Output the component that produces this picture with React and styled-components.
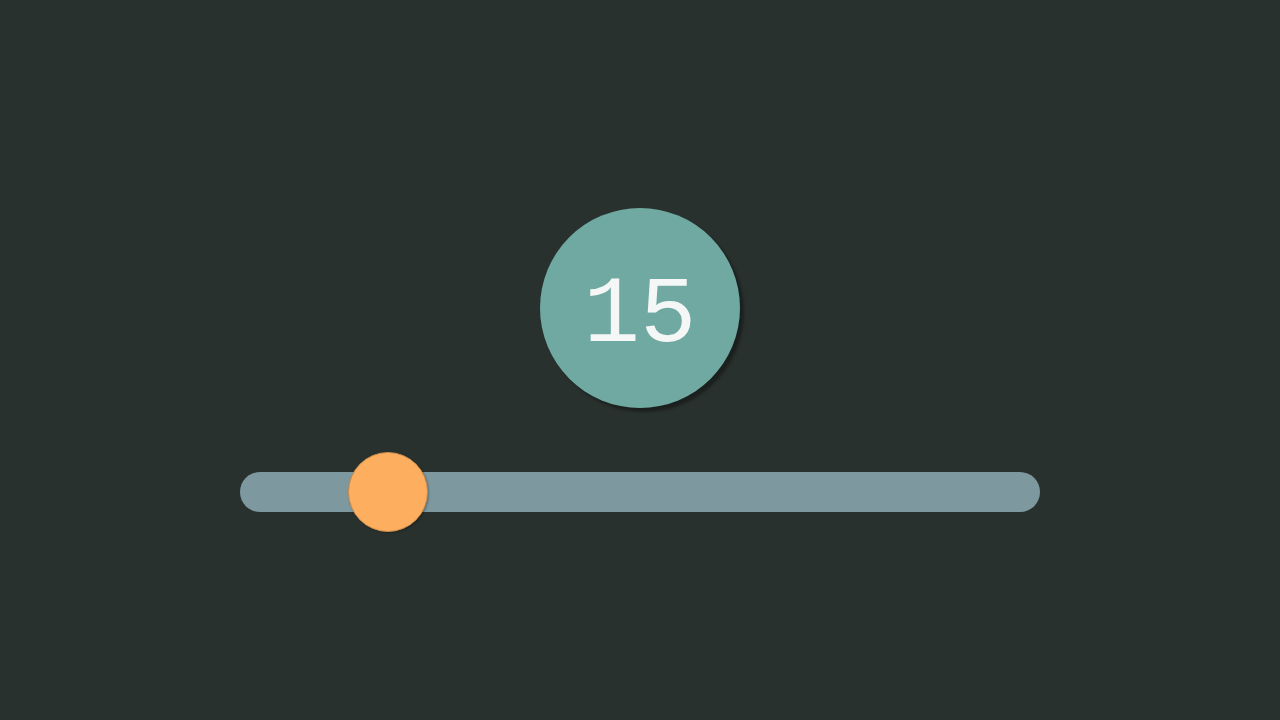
import React, { useState } from "react";
import styled, { createGlobalStyle } from "styled-components";

const Global = createGlobalStyle`
  html, body { margin: 0; padding: 0; background: #29312e; }
  body { font-family: "Liberation Mono", monospace; }
`;

const Page = styled.div`
  width: 1280px;
  height: 720px;
  background: #29312e;
  display: flex;
  flex-direction: column;
  align-items: center;
  padding-top: 208px;
  box-sizing: border-box;
`;

const Bubble = styled.div`
  width: 200px;
  height: 200px;
  border-radius: 50%;
  background: #6fa9a1;
  box-shadow: 4px 4px 3px rgba(0, 0, 0, 0.35);
  display: flex;
  align-items: center;
  justify-content: center;
  color: #f4f7f6;
  font-family: "Liberation Mono", monospace;
  font-size: 94px;
  line-height: 1;
  padding-top: 16px;
  box-sizing: border-box;
`;

const Track = styled.div`
  margin-top: 64px;
  width: 800px;
  height: 40px;
  border-radius: 20px;
  background: #7e98a0;
  position: relative;
`;

const Thumb = styled.div`
  position: absolute;
  top: -20px;
  width: 78px;
  height: 78px;
  border-radius: 50%;
  background: #fdae5f;
  border: 1px solid #c98c4c;
  box-shadow: 1px 1px 2px rgba(0, 0, 0, 0.3);
`;

export default function App() {
  const [value] = useState(15);
  const left = 148 - 40;
  return (
    <>
      <Global />
      <Page>
        <Bubble>{value}</Bubble>
        <Track>
          <Thumb style={{ left }} />
        </Track>
      </Page>
    </>
  );
}
